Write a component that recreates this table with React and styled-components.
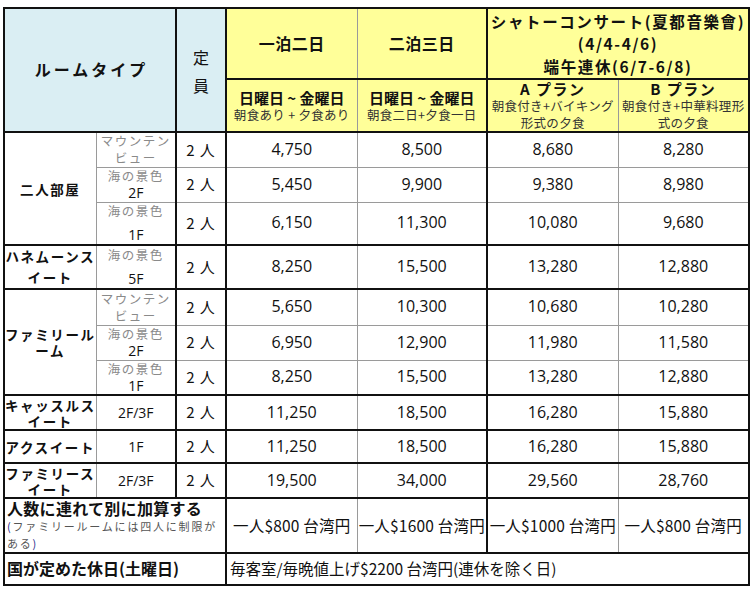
import React from 'react';
import styled, { createGlobalStyle } from 'styled-components';

const Global = createGlobalStyle`
  html, body { margin: 0; padding: 0; background: #fff; }
  body { font-family: "Noto Sans CJK JP", "Noto Sans", sans-serif; color: #111; }
`;

const Page = styled.div`
  padding: 7px 0 0 3px;
`;

const Table = styled.table`
  border-collapse: collapse;
  table-layout: fixed;
  width: 745px;
  border: 2px solid #111;
`;

const Row = styled.tr`
  height: ${(p) => p.$h}px;
`;

const Cell = styled.td`
  border: 1px solid #9a9a9a;
  ${(p) => p.$top && 'border-top: 2px solid #111;'}
  ${(p) => p.$left && 'border-left: 2px solid #111;'}
  padding: 0;
  text-align: center;
  vertical-align: middle;
  white-space: nowrap;
  overflow: hidden;
  font-weight: 400;
  line-height: 1.1;
`;

const BlueHead = styled(Cell)`
  background: #daeef3;
  border-top: 2px solid #111;
  border-bottom: 2px solid #111;
`;

const RoomTypeHead = styled(BlueHead)`
  font-size: 16px;
  font-weight: 700;
  letter-spacing: 3px;
  padding-left: 3px;
`;

const CapacityHead = styled(BlueHead)`
  font-size: 16px;
  line-height: 28px;
  padding-top: 2px;
`;

const YellowHead = styled(Cell)`
  background: #ffff99;
  border-top: 2px solid #111;
`;

const StayHead = styled(YellowHead)`
  font-size: 16px;
  font-weight: 700;
  letter-spacing: 0.5px;
  border-bottom: 2px solid #111;
`;

const EventHead = styled(YellowHead)`
  font-size: 15.5px;
  font-weight: 700;
  letter-spacing: 1.6px;
  line-height: 22.5px;
  border-bottom: 2px solid #111;
`;

const PlanHead = styled(Cell)`
  background: #ffff99;
  border-bottom: 2px solid #111;
`;

const PlanTitle = styled.div`
  font-size: 15px;
  font-weight: 700;
  line-height: 17px;
  letter-spacing: ${(p) => (p.$wide ? '1.5px' : '0')};
`;

const PlanNote = styled.div`
  font-size: 12.5px;
  line-height: 17px;
  color: #333;
  letter-spacing: 0.3px;
`;

const RoomName = styled(Cell)`
  font-size: 13.5px;
  font-weight: 700;
  letter-spacing: 1.6px;
  line-height: ${(p) => (p.$spread ? 21 : 16)}px;
`;

const ViewCell = styled(Cell)`
  line-height: 16px;
`;

const ViewStack = styled.div`
  display: flex;
  flex-direction: column;
  align-items: center;
  gap: ${(p) => (p.$spread ? 8 : 1)}px;
`;

const ViewLabel = styled.div`
  font-size: 12.5px;
  color: #8a8a8a;
  letter-spacing: 1.5px;
`;

const Floor = styled.div`
  font-size: 14px;
  color: #111;
  font-family: "Open Sans", "Noto Sans CJK JP", sans-serif;
`;

const FloorCell = styled(Cell)`
  font-size: 14px;
  font-family: "Open Sans", "Noto Sans CJK JP", sans-serif;
`;

const CapCell = styled(Cell)`
  font-size: 15px;
  letter-spacing: 1px;
`;

const Price = styled(Cell)`
  font-family: "Open Sans", "Noto Sans CJK JP", sans-serif;
  font-size: 16px;
`;

const ExtraLabel = styled(Cell)`
  text-align: left;
  padding: 0 2px;
  line-height: 17px;
  overflow: visible;
`;

const ExtraTitle = styled.div`
  font-size: 16px;
  font-weight: 700;
  letter-spacing: 0.3px;
  line-height: 19px;
`;

const ExtraNote = styled.div`
  font-size: 11px;
  color: #555;
  letter-spacing: 1.8px;
`;

const Paren = styled.span`
  color: #1f2a8a;
`;

const Surcharge = styled(Cell)`
  font-size: 15.5px;
  letter-spacing: 0.2px;
`;

const HolidayLabel = styled(Cell)`
  text-align: left;
  padding-left: 2px;
  font-size: 16px;
  font-weight: 700;
`;

const HolidayValue = styled(Cell)`
  text-align: left;
  padding-left: 3px;
  font-size: 15.5px;
`;

const groups = [
  {
    name: ['二人部屋'],
    rows: [
      { h: 35, view: 'mountain', prices: ['4,750', '8,500', '8,680', '8,280'] },
      { h: 35, view: '2F', prices: ['5,450', '9,900', '9,380', '8,980'] },
      { h: 43, view: '1F', spread: true, prices: ['6,150', '11,300', '10,080', '9,680'] },
    ],
  },
  {
    name: ['ハネムーンス', 'イート'],
    spread: true,
    rows: [{ h: 43, view: '5F', spread: true, prices: ['8,250', '15,500', '13,280', '12,880'] }],
  },
  {
    name: ['ファミリール', 'ーム'],
    rows: [
      { h: 36, view: 'mountain', prices: ['5,650', '10,300', '10,680', '10,280'] },
      { h: 35, view: '2F', prices: ['6,950', '12,900', '11,980', '11,580'] },
      { h: 35, view: '1F', prices: ['8,250', '15,500', '13,280', '12,880'] },
    ],
  },
  { name: ['キャッスルス', 'イート'], rows: [{ h: 35, floor: '2F/3F', prices: ['11,250', '18,500', '16,280', '15,880'] }] },
  { name: ['アクスイート'], rows: [{ h: 33, floor: '1F', prices: ['11,250', '18,500', '16,280', '15,880'] }] },
  { name: ['ファミリース', 'イート'], rows: [{ h: 35, floor: '2F/3F', prices: ['19,500', '34,000', '29,560', '28,760'] }] },
];

function View({ row, top }) {
  return (
    <ViewCell $top={top}>
      <ViewStack $spread={row.spread}>
        {row.view === 'mountain' ? (
          <>
            <ViewLabel>マウンテン</ViewLabel>
            <ViewLabel>ビュー</ViewLabel>
          </>
        ) : (
          <>
            <ViewLabel>海の景色</ViewLabel>
            <Floor>{row.view}</Floor>
          </>
        )}
      </ViewStack>
    </ViewCell>
  );
}

export default function App() {
  return (
    <Page>
      <Global />
      <Table>
        <colgroup>
          <col style={{ width: 92 }} />
          <col style={{ width: 80 }} />
          <col style={{ width: 50 }} />
          <col style={{ width: 131 }} />
          <col style={{ width: 130 }} />
          <col style={{ width: 131 }} />
          <col style={{ width: 131 }} />
        </colgroup>
        <thead>
          <Row $h={71}>
            <RoomTypeHead as="th" rowSpan={2} colSpan={2}>
              ルームタイプ
            </RoomTypeHead>
            <CapacityHead as="th" rowSpan={2} $left>
              定<br />員
            </CapacityHead>
            <StayHead as="th" $left>一泊二日</StayHead>
            <StayHead as="th">二泊三日</StayHead>
            <EventHead as="th" colSpan={2} $left>
              シャトーコンサート(夏都音樂會)
              <br />
              (4/4-4/6)
              <br />
              端午連休(6/7-6/8)
            </EventHead>
          </Row>
          <Row $h={53}>
            <PlanHead as="th" $left>
              <PlanTitle>日曜日 ~ 金曜日</PlanTitle>
              <PlanNote>朝食あり + 夕食あり</PlanNote>
            </PlanHead>
            <PlanHead as="th">
              <PlanTitle>日曜日 ~ 金曜日</PlanTitle>
              <PlanNote>朝食二日+夕食一日</PlanNote>
            </PlanHead>
            <PlanHead as="th" $left>
              <PlanTitle $wide>A プラン</PlanTitle>
              <PlanNote>朝食付き+バイキング</PlanNote>
              <PlanNote>形式の夕食</PlanNote>
            </PlanHead>
            <PlanHead as="th">
              <PlanTitle $wide>B プラン</PlanTitle>
              <PlanNote>朝食付き+中華料理形</PlanNote>
              <PlanNote>式の夕食</PlanNote>
            </PlanHead>
          </Row>
        </thead>
        <tbody>
          {groups.map((g, gi) =>
            g.rows.map((r, ri) => (
              <Row key={`${gi}-${ri}`} $h={r.h}>
                {ri === 0 && (
                  <RoomName rowSpan={g.rows.length} $top $spread={g.spread}>
                    {g.name.map((n, k) => (
                      <div key={k}>{n}</div>
                    ))}
                  </RoomName>
                )}
                {r.floor ? (
                  <FloorCell $top={ri === 0}>{r.floor}</FloorCell>
                ) : (
                  <View row={r} top={ri === 0} />
                )}
                <CapCell $left $top={ri === 0}>2 人</CapCell>
                {r.prices.map((p, i) => (
                  <Price key={i} $left={i === 0 || i === 2} $top={ri === 0}>
                    {p}
                  </Price>
                ))}
              </Row>
            ))
          )}
          <Row $h={55}>
            <ExtraLabel colSpan={3} $top>
              <ExtraTitle>人数に連れて別に加算する</ExtraTitle>
              <ExtraNote>
                <Paren>(</Paren>ファミリールームには四人に制限が
              </ExtraNote>
              <ExtraNote>
                ある<Paren>)</Paren>
              </ExtraNote>
            </ExtraLabel>
            <Surcharge $top $left>一人$800 台湾円</Surcharge>
            <Surcharge $top>一人$1600 台湾円</Surcharge>
            <Surcharge $top $left>一人$1000 台湾円</Surcharge>
            <Surcharge $top>一人$800 台湾円</Surcharge>
          </Row>
          <Row $h={32}>
            <HolidayLabel colSpan={3} $top>国が定めた休日(土曜日)</HolidayLabel>
            <HolidayValue colSpan={4} $top $left>
              毎客室/毎晩値上げ$2200 台湾円(連休を除く日)
            </HolidayValue>
          </Row>
        </tbody>
      </Table>
    </Page>
  );
}
